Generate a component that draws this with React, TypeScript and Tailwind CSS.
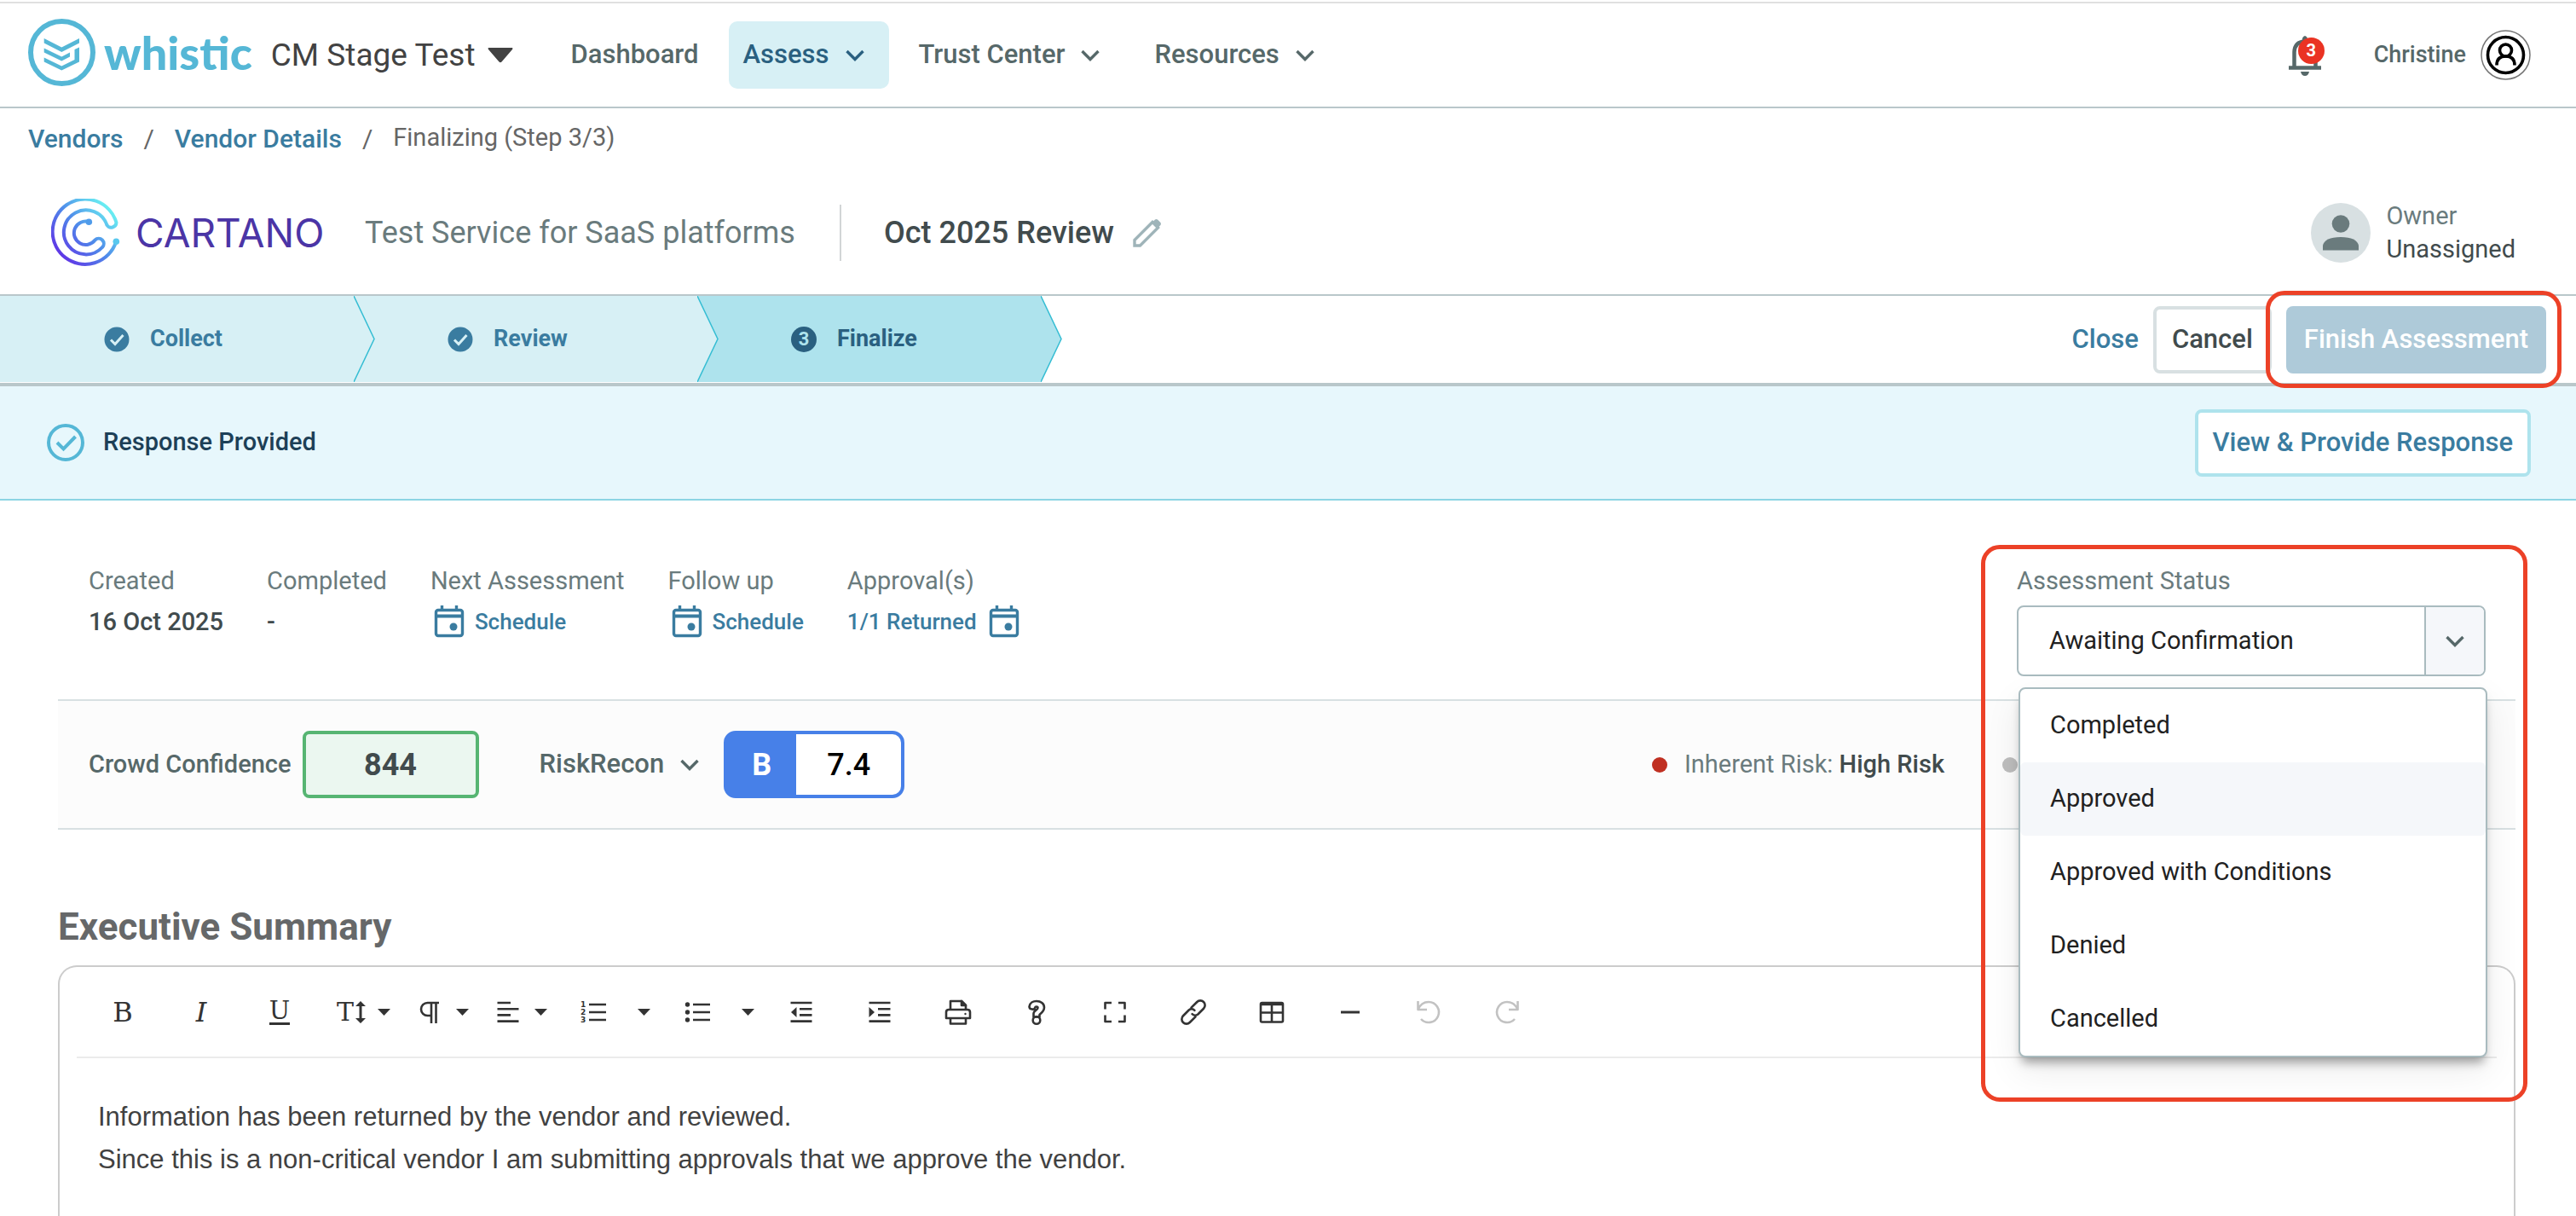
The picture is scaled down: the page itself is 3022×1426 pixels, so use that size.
import type { ReactNode } from "react";

const navItems = [
  { label: "Dashboard", menu: false, active: false },
  { label: "Assess", menu: true, active: true },
  { label: "Trust Center", menu: true, active: false },
  { label: "Resources", menu: true, active: false },
];

const steps = [
  { label: "Collect", done: true },
  { label: "Review", done: true },
  { label: "Finalize", done: false },
];

const statuses = ["Completed", "Approved", "Approved with Conditions", "Denied", "Cancelled"];

const summary =
  "Information has been returned by the vendor and reviewed.\nSince this is a non-critical vendor I am submitting approvals that we approve the vendor.";

function Chevron() {
  return (
    <svg className="w-6 h-6 shrink-0" viewBox="0 0 24 24" fill="none" stroke="currentColor" strokeWidth="3.4">
      <path d="M2.5 7l9.5 9.5L21.5 7" />
    </svg>
  );
}

function CheckBadge() {
  return (
    <svg className="w-[30px] h-[30px]" viewBox="0 0 30 30">
      <circle cx="15" cy="15" r="14.5" fill="#3a7ca0" />
      <path d="M8 15.5l5 5L22.5 10" fill="none" stroke="#d7f0f5" strokeWidth="3" />
    </svg>
  );
}

function CalendarIcon() {
  return (
    <svg className="w-9 h-10 shrink-0" viewBox="0 0 36 40" fill="none" stroke="#3a7ca0">
      <rect x="2.5" y="6.5" width="31" height="30" rx="2.5" strokeWidth="3.4" />
      <path d="M2 13.5h32" strokeWidth="4" />
      <path d="M9.5 1v6M26.5 1v6" strokeWidth="3.4" />
      <circle cx="23" cy="26" r="4.5" fill="#3a7ca0" stroke="none" />
    </svg>
  );
}

function WhisticLogo() {
  return (
    <a href="#" className="-mt-1.5 flex items-center gap-[10px] text-[#55b7d6]">
      <svg className="w-[79px] h-[79px]" viewBox="0 0 79 79" fill="currentColor">
        <circle cx="39.5" cy="39.5" r="36.5" fill="none" stroke="currentColor" strokeWidth="6" />
        <path d="M18.7 23L39.3 33.5 60 23v5.5L39.3 39 18.7 28.5z" />
        <path d="M18.7 34.5l20.6 10 9.7-5v5l-9.7 5-20.6-10z" />
        <path d="M18.7 45.5l20.6 10L54.5 48V36l5.5-2.5v17l-20.7 10-20.6-10z" />
      </svg>
      <span className="font-['Lato',sans-serif] text-[54px] leading-[60px] font-black">whistic</span>
    </a>
  );
}

function CartanoLogo() {
  return (
    <div className="flex items-center gap-[18px]">
      <svg className="w-[81px] h-[81px]" viewBox="0 0 81 81" fill="none">
        <defs>
          <linearGradient id="cartano" x1="12" y1="68" x2="70" y2="14" gradientUnits="userSpaceOnUse">
            <stop offset="0" stopColor="#5f36e6" />
            <stop offset="0.5" stopColor="#4f8bea" />
            <stop offset="1" stopColor="#69eef2" />
          </linearGradient>
        </defs>
        <path
          d="M76 51A38.2 38.2 0 1 1 76.5 28A6 6 0 0 1 65.5 31A26 26 0 1 0 60 57A6 6 0 0 0 51.5 48.5A13.7 13.7 0 1 1 44 27"
          stroke="url(#cartano)"
          strokeWidth="4"
        />
        <circle cx="76.3" cy="50.3" r="3.8" fill="#58c8ee" />
        <circle cx="44.3" cy="27.3" r="3.8" fill="#4f9bea" />
      </svg>
      <span className="w-[224px] font-['Inter',sans-serif] text-[46px] leading-[48px] text-[#4b35a6]">CARTANO</span>
    </div>
  );
}

function Header() {
  return (
    <header className="mt-0.5 border-t-2 border-t-[#e0e0e0] border-b-2 border-b-[#b9c7ca] h-[125px] pl-[33px] pr-[53px] flex items-center">
      <WhisticLogo />
      <button className="ml-[22px] flex items-center gap-3.5 text-[37px] text-[#424242]">
        CM Stage Test
        <svg className="w-[30px] h-[18px]" viewBox="0 0 30 18" fill="currentColor">
          <path d="M1 0h28q1 1 0 2L16.5 16.500q-1.500 1.500-3 0L1 2Q0 1 1 0z" />
        </svg>
      </button>
      <nav className="ml-[51px] flex items-center gap-[18px]">
        {navItems.map((n) => (
          <button
            key={n.label}
            className={`h-[79px] rounded-[10px] pl-[17px] flex items-center gap-[18px] text-[31px] font-medium ${n.menu ? "pr-7" : "pr-[17px]"} ${n.active ? "bg-[#d7f0f5] text-[#2a6080]" : "text-[#566869]"}`}
          >
            {n.label}
            {n.menu && <Chevron />}
          </button>
        ))}
      </nav>
      <button className="relative ml-auto" aria-label="Notifications">
        <svg className="w-[38px] h-12" viewBox="0 0 38 48" fill="none" stroke="#566869">
          <path d="M6.500 38V20Q7 8 19 7.500Q31 8 31.500 20V38" strokeWidth="4.500" />
          <path d="M0 38.500h38" strokeWidth="4.500" />
          <path d="M16 7V3.500q3-5 6 0V7z" fill="#566869" stroke="none" />
          <path d="M14 43h10q-1 5-5 5t-5-5z" fill="#566869" stroke="none" />
        </svg>
        <span className="absolute -right-1 top-[3px] w-[31px] h-[31px] rounded-full bg-[#ea3323] text-white text-[20px] leading-[31px] font-bold text-center">3</span>
      </button>
      <button className="ml-[62px] flex items-center gap-[17px] text-[27px] font-medium text-[#566869]">
        Christine
        <svg className="w-[59px] h-[59px]" viewBox="0 0 59 59" fill="none" stroke="#000">
          <circle cx="29.500" cy="29.500" r="28.500" stroke="#757575" strokeWidth="1.500" />
          <circle cx="29.500" cy="29.500" r="21" strokeWidth="3.600" />
          <circle cx="29.500" cy="24" r="7" strokeWidth="3.600" />
          <path d="M19 41.500q0-10.500 10.500-10.500T40 41.500" strokeWidth="3.600" />
        </svg>
      </button>
    </header>
  );
}

function TitleBar() {
  return (
    <div className="h-36 pl-[60px] pr-[71px] flex items-center">
      <CartanoLogo />
      <span className="ml-[45px] text-[36px] text-[#6a7b7d]">Test Service for SaaS platforms</span>
      <span className="ml-[52px] w-0.5 h-[66px] bg-[#d2d5d6]" />
      <h1 className="ml-[50px] text-[36px] font-medium text-[#414b4d]">Oct 2025 Review</h1>
      <button className="ml-[22px]" aria-label="Edit name">
        <svg className="w-[34px] h-[34px]" viewBox="0 0 34 34" fill="none" stroke="#9fb4b9" strokeWidth="3.400">
          <path d="M2 32v-6.500L23 4.500l6.500 6.500-21 21z" />
          <path d="M22.500 5L26 1.500q1.500-1 3 0l3.500 3.500q1 1.500 0 3L29 11.500z" fill="#9fb4b9" stroke="none" />
        </svg>
      </button>
      <div className="ml-auto flex items-center gap-[18px]">
        <svg className="w-[70px] h-[70px]" viewBox="0 0 70 70">
          <circle cx="35" cy="35" r="35" fill="#d8e0e2" />
          <circle cx="35" cy="24.500" r="10.300" fill="#6a7b7d" />
          <path d="M14 55.500V50q2-10 21-10t21 10v5.500z" fill="#6a7b7d" />
        </svg>
        <div className="text-[29px] leading-[39px]">
          <div className="text-[#6a7b7d]">Owner</div>
          <div className="text-[#414b4d]">Unassigned</div>
        </div>
      </div>
    </div>
  );
}

function Stepper() {
  return (
    <div className="h-[108px] border-t-2 border-b-4 border-[#b9c7ca] pr-[35px] flex items-center justify-between">
      <ol className="h-[101px] self-start flex">
        {steps.map((s, i) => (
          <li
            key={s.label}
            className={`relative h-full w-[403px] box-content flex items-center gap-6 text-[27px] font-bold ${i === 0 ? "pl-3" : ""} ${s.done ? "bg-[#d7f0f5] text-[#3a7ca0]" : "bg-[#aee3ed] text-[#2a6080]"}`}
          >
            <span className="ml-[110px]">
              {s.done ? (
                <CheckBadge />
              ) : (
                <span className="flex w-[30px] h-[30px] rounded-full bg-[#2a6080] text-[#aee3ed] text-[22px] items-center justify-center">{i + 1}</span>
              )}
            </span>
            {s.label}
            <svg className="absolute left-full top-0 z-10 w-[25px] h-[101px]" viewBox="0 0 25 101">
              <path d="M0 0l24 50.500L0 101z" fill={s.done ? "#d7f0f5" : "#aee3ed"} />
              <path d="M0 0l24 50.500L0 101" fill="none" stroke="#35bdd3" strokeWidth="1.500" />
            </svg>
          </li>
        ))}
      </ol>
      <div className="flex items-center gap-[17px] text-[31px] font-medium">
        <button className="text-[#3a7ca0]">Close</button>
        <button className="h-[79px] px-[18px] border-4 border-[#d8e0e2] rounded-lg text-[#414b4d]">Cancel</button>
        <div className="relative">
          <button disabled className="h-[79px] px-[21px] rounded-lg bg-[#aecad9] text-white">Finish Assessment</button>
          <div className="absolute -left-6 -right-[18px] -top-[18px] -bottom-[17px] border-5 border-[#ec4127] rounded-[22px] z-20 pointer-events-none" />
        </div>
      </div>
    </div>
  );
}

function Banner() {
  return (
    <div className="h-[134px] bg-[#e7f7fc] border-b-2 border-[#8cd4e3] pl-[55px] pr-[53px] flex items-center gap-[22px]">
      <svg className="w-11 h-11" viewBox="0 0 44 44" fill="none" stroke="#55b7d6" strokeWidth="4">
        <circle cx="22" cy="22" r="20" />
        <path d="M12 22l7.500 7.500L33.500 15" />
      </svg>
      <span className="text-[29px] font-medium text-[#1d4057]">Response Provided</span>
      <button className="ml-auto h-[79px] px-[17px] border-4 border-[#aee3ed] rounded-lg bg-white text-[31px] font-medium text-[#3a7ca0]">
        View &amp; Provide Response
      </button>
    </div>
  );
}

function Detail({ label, children }: { label: string; children: ReactNode }) {
  return (
    <div className="text-[29px] leading-[48px]">
      <dt className="text-[#6a7b7d]">{label}</dt>
      <dd className="h-12 flex items-center font-medium text-[#414b4d]">{children}</dd>
    </div>
  );
}

function ScheduleLink() {
  return (
    <a href="#" className="flex items-center gap-3 pl-1 text-[26px] text-[#3a7ca0]">
      <CalendarIcon />
      Schedule
    </a>
  );
}

function StatusField() {
  return (
    <div className="relative w-[550px] text-[29px]">
      <label htmlFor="status" className="block leading-[48px] text-[#6a7b7d]">Assessment Status</label>
      <div className="relative mt-[5px]">
        <select
          id="status"
          defaultValue="Awaiting Confirmation"
          className="w-full h-[83px] appearance-none border-2 border-[#a9bbbf] rounded-lg bg-white pl-9 text-[#212121]"
        >
          <option>Awaiting Confirmation</option>
          {statuses.map((s) => (
            <option key={s}>{s}</option>
          ))}
        </select>
        <span className="absolute right-0.5 inset-y-0.5 w-[70px] border-l-2 border-[#a9bbbf] rounded-r-md bg-[#f5f7fa] text-[#566869] flex items-center justify-center pointer-events-none">
          <Chevron />
        </span>
      </div>
      <ul
        role="listbox"
        className="absolute left-0.5 top-[149px] w-full z-10 border-2 border-[#a9bbbf] rounded-lg bg-white text-[#212121] shadow-[0_10px_12px_-4px_rgba(0,0,0,0.35),0_16px_40px_rgba(0,0,0,0.08)]"
      >
        {statuses.map((s) => (
          <li
            key={s}
            role="option"
            aria-selected={s === "Approved"}
            className={`h-[86px] pl-[35px] flex items-center rounded-md ${s === "Approved" ? "bg-[#f5f7fa]" : ""}`}
          >
            {s}
          </li>
        ))}
      </ul>
      <div className="absolute -left-[42px] -right-[49px] -top-[18px] h-[653px] border-5 border-[#ec4127] rounded-[22px] z-20 pointer-events-none" />
    </div>
  );
}

function Details() {
  return (
    <div className="pt-[70px] pb-[27px] pl-9 pr-[35px] flex justify-between">
      <dl className="flex gap-[51px]">
        <Detail label="Created">16 Oct 2025</Detail>
        <Detail label="Completed">-</Detail>
        <Detail label="Next Assessment"><ScheduleLink /></Detail>
        <Detail label="Follow up"><ScheduleLink /></Detail>
        <Detail label="Approval(s)">
          <a href="#" className="flex items-center gap-3.5 text-[26px] text-[#3a7ca0]">
            1/1 Returned
            <CalendarIcon />
          </a>
        </Detail>
      </dl>
      <StatusField />
    </div>
  );
}

function ScoreBar() {
  return (
    <div className="h-[153px] border-y-2 border-[#d8e0e2] bg-[#fcfcfc] px-9 flex items-center text-[29px] text-[#566869]">
      <span className="font-medium">Crowd Confidence</span>
      <span className="ml-[13px] w-[207px] h-[79px] border-4 border-[#56b572] rounded-lg bg-[#ebf7f0] flex items-center justify-center text-[36px] font-bold text-[#414b4d]">844</span>
      <button className="ml-[71px] flex items-center gap-[18px] text-[31px] font-medium">
        RiskRecon
        <Chevron />
      </button>
      <span className="ml-7 w-[212px] h-[79px] border-4 border-[#4780e8] rounded-[14px] bg-white flex text-[36px] font-medium">
        <span className="w-[81px] bg-[#4780e8] text-white font-bold flex items-center justify-center">B</span>
        <span className="flex-1 text-black flex items-center justify-center">7.4</span>
      </span>
      <div className="ml-auto mr-[548px] flex items-center gap-5 text-[#6a7b7d]">
        <span className="w-[18px] h-[18px] rounded-full bg-[#c03022]" />
        <span>
          Inherent Risk: <span className="font-medium text-[#414b4d]">High Risk</span>
        </span>
        <span className="ml-12 w-[18px] h-[18px] rounded-full bg-[#bdbdbd]" />
      </div>
    </div>
  );
}

function Icon({ children }: { children: ReactNode }) {
  return (
    <svg className="w-[34px] h-[34px]" viewBox="0 0 34 34" fill="none" stroke="currentColor" strokeWidth="2.600" strokeLinejoin="round">
      {children}
    </svg>
  );
}

function Caret() {
  return (
    <svg className="w-[15px] h-2" viewBox="0 0 15 8" fill="currentColor">
      <path d="M0 0h15L7.500 8z" />
    </svg>
  );
}

function Tool({ label, children }: { label: string; children: ReactNode }) {
  return (
    <button aria-label={label} className="w-[92px] h-full shrink-0 flex items-center justify-center">
      {children}
    </button>
  );
}

function MenuTool({ label, children }: { label: string; children: ReactNode }) {
  return (
    <button aria-label={label} className="w-[92px] h-full shrink-0 flex items-center gap-3.5 pl-[21px]">
      {children}
      <Caret />
    </button>
  );
}

function SplitTool({ label, children }: { label: string; children: ReactNode }) {
  return (
    <div className="h-full shrink-0 flex">
      <Tool label={label}>{children}</Tool>
      <button aria-label={`${label} options`} className="w-[30px] pr-1 flex items-center justify-center">
        <Caret />
      </button>
    </div>
  );
}

function Toolbar() {
  return (
    <div className="mx-5 h-[107px] shrink-0 border-b-2 border-[#ebebeb] pl-2 flex items-center text-[#333] font-['DejaVu_Serif',serif] text-[32px]">
      <Tool label="Bold">B</Tool>
      <Tool label="Italic"><i>I</i></Tool>
      <Tool label="Underline">
        <span className="border-b-[3px] border-[#333] leading-7 text-[29px]">U</span>
      </Tool>
      <MenuTool label="Font size">
        <span className="w-[34px] flex items-center">
          <span className="text-[30px] leading-[34px] w-5 flex justify-center">T</span>
          <svg className="w-3 h-[26px] ml-0.5 shrink-0" viewBox="0 0 12 26" fill="currentColor">
            <path d="M6 0l6 6H7.500v14H12l-6 6-6-6h4.500V6H0z" />
          </svg>
        </span>
      </MenuTool>
      <MenuTool label="Paragraph format">
        <Icon><path d="M28 6H14.500a7.500 7.500 0 0 0 0 15H19M19 6v24M24.500 6v24" /></Icon>
      </MenuTool>
      <MenuTool label="Align">
        <Icon><path d="M4.500 6H20M4.500 13.200h25M4.500 20.400H20M4.500 27.600h25" /></Icon>
      </MenuTool>
      <SplitTool label="Ordered list">
        <Icon>
          <path d="M12 8h20M12 17h20M12 26h20" />
          <g fill="currentColor" stroke="none" fontFamily="DejaVu Sans" fontSize="9" fontWeight="bold">
            <text x="2" y="11">1</text>
            <text x="2" y="20">2</text>
            <text x="2" y="29">3</text>
          </g>
        </Icon>
      </SplitTool>
      <SplitTool label="Unordered list">
        <Icon>
          <path d="M12 8h20M12 17h20M12 26h20" />
          <g fill="currentColor" stroke="none">
            <circle cx="5.500" cy="8" r="2.700" />
            <circle cx="5.500" cy="17" r="2.700" />
            <circle cx="5.500" cy="26" r="2.700" />
          </g>
        </Icon>
      </SplitTool>
      <Tool label="Decrease indent">
        <Icon>
          <path d="M4.500 6h25M15 13.200h14.500M15 20.400h14.500M4.500 27.600h25" />
          <path d="M11.500 11v12l-6.500-6z" fill="currentColor" stroke="none" />
        </Icon>
      </Tool>
      <Tool label="Increase indent">
        <Icon>
          <path d="M4.500 6h25M15 13.200h14.500M15 20.400h14.500M4.500 27.600h25" />
          <path d="M4.500 11v12l6.500-6z" fill="currentColor" stroke="none" />
        </Icon>
      </Tool>
      <Tool label="Print">
        <Icon>
          <path d="M8 14V4h13l5 5v5" />
          <path d="M6 14h22q3 0 3 3v7H3v-7q0-3 3-3z" />
          <path d="M8 24v6.500h18V24" />
          <path d="M21 4v5h5z" fill="currentColor" />
          <circle cx="25.500" cy="19" r="1.200" fill="currentColor" stroke="none" />
        </Icon>
      </Tool>
      <Tool label="Help">
        <Icon>
          <path d="M8.500 10.500C9 6 13 4 17 4c5 0 9 3 9 7.500 0 4-2.500 6-5.500 8.500v2.500h-7V18.500c0-3.500 5-4 5-6.500 0-2-3-2-3.500 0-.500 2.500-6.500 2-6.500-1.500z" />
          <circle cx="17" cy="26.500" r="4.300" />
        </Icon>
      </Tool>
      <Tool label="Fullscreen">
        <Icon><path d="M5.500 13.500V6H13M21 6h7.500v7.500M28.500 20.500V28H21M13 28H5.500v-7.500" /></Icon>
      </Tool>
      <Tool label="Link">
        <Icon>
          <g transform="rotate(-45 17 17)">
            <path d="M15 22.500H5.500a5.500 5.500 0 0 1 0-11H15a5 5 0 0 1 4.500 5" strokeLinecap="round" />
            <path d="M19 11.500h9.500a5.500 5.500 0 0 1 0 11H19a5 5 0 0 1-4.500-5" strokeLinecap="round" />
          </g>
        </Icon>
      </Tool>
      <Tool label="Table">
        <Icon>
          <rect x="4" y="6" width="26" height="22.500" rx="1.500" />
          <path d="M4 17.500h26M17 6v22" />
          <path d="M4 7.200h26" strokeWidth="4" />
        </Icon>
      </Tool>
      <Tool label="Horizontal line">
        <Icon><path d="M6 17h22" strokeWidth="3" /></Icon>
      </Tool>
      <Tool label="Undo">
        <span className="text-[#c2c2c2]">
          <Icon><path d="M4.500 4v10H15M4.500 14C7 8 11 5 17 5a12 12 0 1 1-9 20" /></Icon>
        </span>
      </Tool>
      <Tool label="Redo">
        <span className="text-[#c2c2c2]">
          <Icon><path d="M29.500 4v10H19M29.500 14C27 8 23 5 17 5a12 12 0 1 0 9 20" /></Icon>
        </span>
      </Tool>
    </div>
  );
}

export default function App() {
  return (
    <div className="h-screen overflow-hidden flex flex-col bg-white font-['Roboto',sans-serif]">
      <Header />
      <nav className="h-[74px] pb-1 pl-[33px] flex items-center gap-6 text-[30px] text-[#666]">
        <a href="#" className="font-medium text-[#3a7ca0]">Vendors</a>
        <span>/</span>
        <a href="#" className="font-medium text-[#3a7ca0]">Vendor Details</a>
        <span>/</span>
        <span className="text-[29px]">Finalizing (Step 3/3)</span>
      </nav>
      <TitleBar />
      <Stepper />
      <Banner />
      <main className="flex-1 min-h-0 pl-[68px] pr-[71px] flex flex-col">
        <Details />
        <ScoreBar />
        <h2 id="summary-title" className="mt-[86px] mb-[17px] text-[44px] leading-[56px] font-bold text-[#666869]">Executive Summary</h2>
        <section className="flex-1 border-2 border-b-0 border-[#ccc] rounded-t-[22px] flex flex-col">
          <Toolbar />
          <textarea
            aria-labelledby="summary-title"
            defaultValue={summary}
            className="flex-1 resize-none pt-[44px] px-[45px] font-['Liberation_Sans',sans-serif] text-[31px] leading-[50px] text-[#414141]"
          />
        </section>
      </main>
    </div>
  );
}
